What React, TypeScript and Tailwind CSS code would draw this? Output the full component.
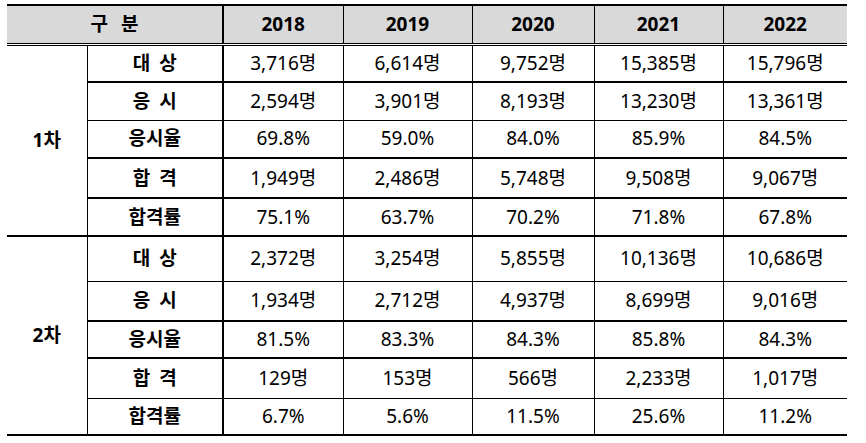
const years = ["2018", "2019", "2020", "2021", "2022"];

type Row = {
  label: string;
  values: string[];
  h: string;
  line: string; // bottom border of the row
};

const sections: { name: string; rows: Row[] }[] = [
  {
    name: "1차",
    rows: [
      { label: "대 상", values: ["3,716명", "6,614명", "9,752명", "15,385명", "15,796명"], h: "h-[38px]", line: "border-b-2" },
      { label: "응 시", values: ["2,594명", "3,901명", "8,193명", "13,230명", "13,361명"], h: "h-[38px]", line: "border-b" },
      { label: "응시율", values: ["69.8%", "59.0%", "84.0%", "85.9%", "84.5%"], h: "h-[38px]", line: "border-b-2" },
      { label: "합 격", values: ["1,949명", "2,486명", "5,748명", "9,508명", "9,067명"], h: "h-[40px]", line: "border-b-2" },
      { label: "합격률", values: ["75.1%", "63.7%", "70.2%", "71.8%", "67.8%"], h: "h-[38px]", line: "border-b-2" },
    ],
  },
  {
    name: "2차",
    rows: [
      { label: "대 상", values: ["2,372명", "3,254명", "5,855명", "10,136명", "10,686명"], h: "h-[45px]", line: "border-b" },
      { label: "응 시", values: ["1,934명", "2,712명", "4,937명", "8,699명", "9,016명"], h: "h-[40px]", line: "border-b-2" },
      { label: "응시율", values: ["81.5%", "83.3%", "84.3%", "85.8%", "84.3%"], h: "h-[37px]", line: "border-b-2" },
      { label: "합 격", values: ["129명", "153명", "566명", "2,233명", "1,017명"], h: "h-[40px]", line: "border-b" },
      { label: "합격률", values: ["6.7%", "5.6%", "11.5%", "25.6%", "11.2%"], h: "h-[37px]", line: "border-b-2" },
    ],
  },
];

export default function App() {
  return (
    <div
      className="w-[866px] h-[443px] bg-white pt-[4px] pl-[7px] text-black"
      style={{ fontFamily: '"Noto Sans", "Noto Sans CJK KR", sans-serif' }}
    >
      <table className="border-collapse table-fixed w-[840px] text-[19px] leading-none">
        <colgroup>
          <col className="w-[80px]" />
          <col className="w-[136px]" />
          <col className="w-[120px]" />
          <col className="w-[129px]" />
          <col className="w-[122px]" />
          <col className="w-[129px]" />
          <col className="w-[124px]" />
        </colgroup>
        <thead>
          <tr className="h-[39px] bg-[#d9d9d9] border-t-2 border-b-[3px] border-double border-black">
            <th
              colSpan={2}
              className="border-r-2 border-black font-bold text-center [word-spacing:8px]"
            >
              구 분
            </th>
            {years.map((y, i) => (
              <th
                key={y}
                className={`font-bold text-center border-black ${i < 4 ? "border-r" : ""}`}
              >
                {y}
              </th>
            ))}
          </tr>
        </thead>
        <tbody>
          {sections.map((sec) =>
            sec.rows.map((row, ri) => (
              <tr key={sec.name + ri} className={row.h}>
                {ri === 0 && (
                  <td
                    rowSpan={sec.rows.length}
                    className="border-r border-b-2 border-black text-center font-bold"
                  >
                    {sec.name}
                  </td>
                )}
                <td
                  className={`border-r-2 border-black text-center font-bold [word-spacing:4px] ${row.line}`}
                >
                  {row.label}
                </td>
                {row.values.map((v, i) => (
                  <td
                    key={i}
                    className={`border-black text-center ${row.line} ${i < 4 ? "border-r" : ""}`}
                  >
                    {v}
                  </td>
                ))}
              </tr>
            ))
          )}
        </tbody>
      </table>
    </div>
  );
}
